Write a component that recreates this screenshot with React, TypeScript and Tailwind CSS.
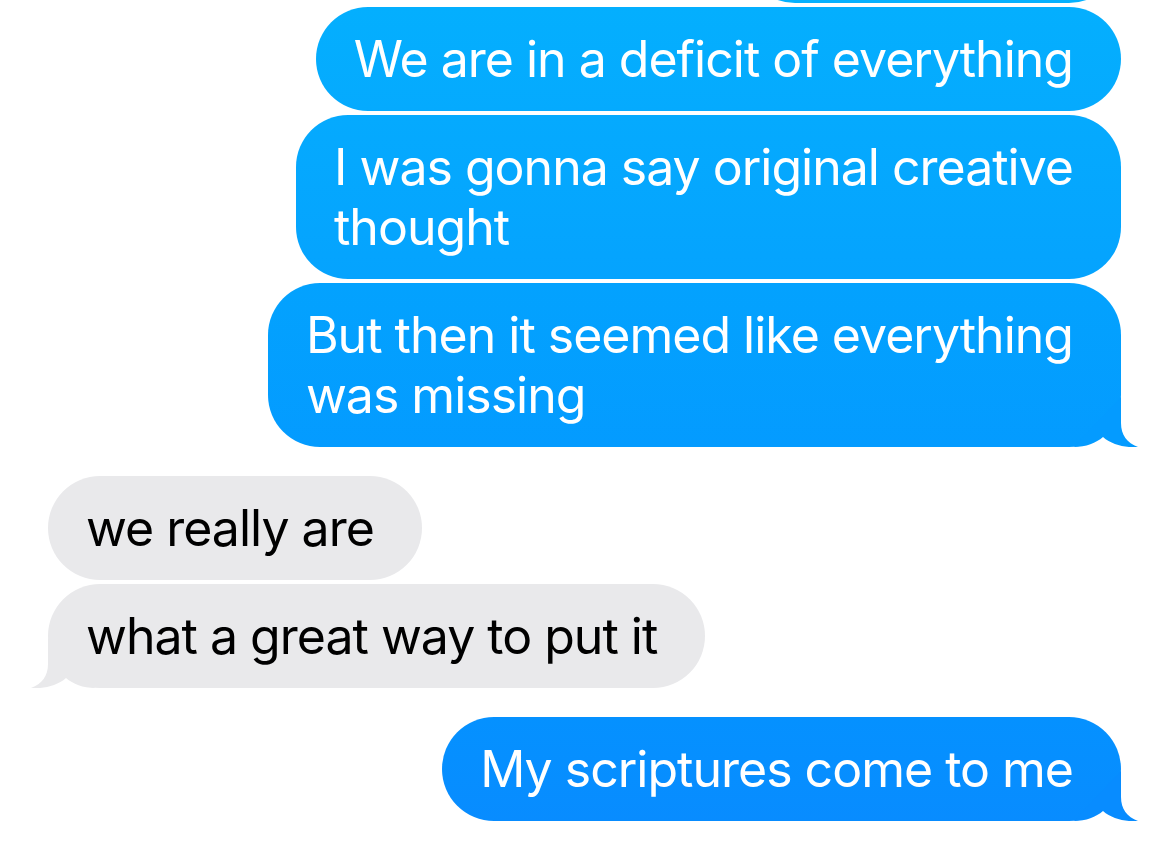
import React from "react";

type Side = "sent" | "received";

// small curled tail drawn at the bottom corner of the last bubble in a group
function Tail({ side, color }: { side: Side; color: string }) {
  return (
    <svg
      width="70"
      height="50"
      viewBox="0 0 70 50"
      className={
        side === "sent"
          ? "absolute bottom-0 right-[-19px]"
          : "absolute bottom-0 left-[-19px] -scale-x-100"
      }
    >
      <path
        d="M51 0 L51 26 C51 38 57 46 68 50 C56 51 42 48 33 40 C26 46 16 50 4 50 Z"
        fill={color}
      />
    </svg>
  );
}

function Bubble({
  side,
  bg,
  tail,
  children,
}: {
  side: Side;
  bg: string;
  tail?: string;
  children: React.ReactNode;
}) {
  return (
    <div
      className={`relative whitespace-nowrap rounded-[52px] pl-[38px] pr-[48px] pt-[22px] pb-[22px] ${bg} ${
        side === "sent" ? "text-white" : "text-black"
      }`}
    >
      <span className="relative z-10">{children}</span>
      {tail && <Tail side={side} color={tail} />}
    </div>
  );
}

export default function App() {
  return (
    <div className="h-[851px] w-full overflow-hidden bg-white font-['Inter','Liberation_Sans',sans-serif] text-[50px] leading-[60px] tracking-[-0.02em]">
      {/* sent group, top bubble cut off by the screen edge */}
      <div className="flex flex-col items-end gap-[4px] pr-[49px]">
        <div className="-mt-[101px] h-[104px] w-[378px] rounded-[52px] bg-[#05B1FE]" />
        <Bubble side="sent" bg="bg-linear-to-b from-[#04AFFE] to-[#05AAFE]">
          We are in a deficit of everything
        </Bubble>
        <Bubble side="sent" bg="bg-linear-to-b from-[#05AAFE] to-[#05A3FE]">
          I was gonna say original creative
          <br />
          thought
        </Bubble>
        <Bubble side="sent" bg="bg-linear-to-b from-[#03A2FE] to-[#049BFF]" tail="#049BFF">
          But then it seemed like everything
          <br />
          was missing
        </Bubble>
      </div>

      {/* received group */}
      <div className="mt-[29px] flex flex-col items-start gap-[4px] pl-[48px]">
        <Bubble side="received" bg="bg-[#E9E9EB]">
          we really are
        </Bubble>
        <Bubble side="received" bg="bg-[#E9E9EB]" tail="#E9E9EB">
          what a great way to put it
        </Bubble>
      </div>

      {/* sent */}
      <div className="mt-[29px] flex flex-col items-end pr-[49px]">
        <Bubble side="sent" bg="bg-linear-to-b from-[#0591FF] to-[#088CFF]" tail="#088CFF">
          My scriptures come to me
        </Bubble>
      </div>
    </div>
  );
}
